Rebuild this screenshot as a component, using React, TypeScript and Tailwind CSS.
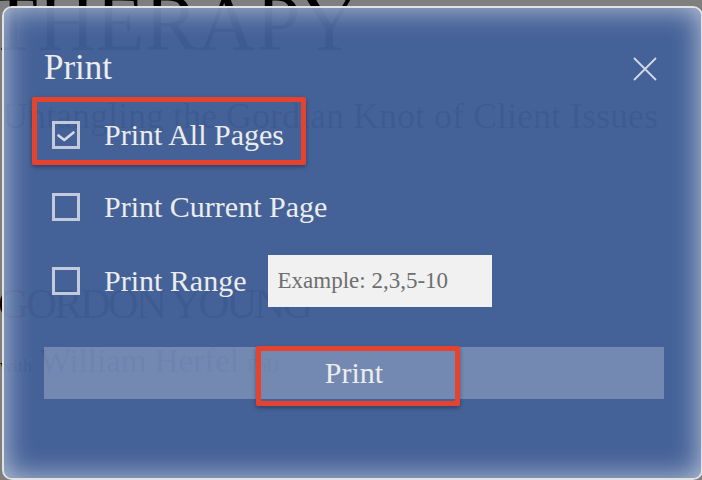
import React from "react";

function Checkbox({ checked }: { checked?: boolean }) {
  return (
    <span className="flex h-[28px] w-[28px] shrink-0 border-[3px] border-[#c2cadb]">
      {checked && (
        <svg width="22" height="22" viewBox="0 0 22 22" fill="none">
          <path
            d="M3.5 11.5 L9.3 16 L18.5 8.5"
            stroke="#d4dbe7"
            strokeWidth="2.6"
            strokeLinecap="round"
            strokeLinejoin="round"
          />
        </svg>
      )}
    </span>
  );
}

function Option({ label, checked }: { label: string; checked?: boolean }) {
  return (
    <label className="flex h-[28px] items-center gap-[24px] pl-[8px]">
      <Checkbox checked={checked} />
      <span className="text-[30px] leading-[30px] text-[#ececec]">{label}</span>
    </label>
  );
}

export default function App() {
  return (
    <div className="relative h-[480px] w-[702px] overflow-hidden bg-white font-['Liberation_Serif','Times_New_Roman',serif] text-black">
      {/* Page behind the dialog */}
      <div className="flex flex-col">
        <div className="ml-[-11px] mt-[-17px] whitespace-nowrap text-[80px] leading-[80px]">THERAPY</div>
        <div className="ml-[2px] mt-[35px] whitespace-nowrap text-[36px] leading-[36px]">
          Untangling the Gordian Knot of Client Issues
        </div>
        <div className="ml-[-2px] mt-[148px] whitespace-nowrap text-[43px] leading-[43px] tracking-[-3px]">
          GORDON YOUNG
        </div>
        <div className="mt-[20px] whitespace-nowrap text-[33px] leading-[33px]">
          <span className="text-[18px]">with</span> William Herfel <span className="text-[18px]">PhD</span>
        </div>
      </div>

      {/* Dimmed overlay */}
      <div className="absolute inset-0 bg-black/50" />

      {/* Print dialog */}
      <div className="absolute left-[2px] top-[6px] flex h-[474px] w-[701px] flex-col rounded-[10px] border-2 border-[#e2e2e2] bg-[rgba(66,97,154,0.94)] pl-[40px] shadow-[inset_0_0_28px_rgba(255,255,255,0.65)]">
        <div className="mt-[42px] flex items-center justify-between pr-[44px]">
          <h2 className="text-[35px] leading-[35px] text-[#ececec]">Print</h2>
          <button aria-label="Close" className="mt-[2px]">
            <svg width="24" height="24" viewBox="0 0 24 24" fill="none">
              <path d="M1 1 L23 23 M23 1 L1 23" stroke="#d3d9e5" strokeWidth="1.8" />
            </svg>
          </button>
        </div>

        <div className="mt-[36px] flex flex-col">
          <Option label="Print All Pages" checked />
          <div className="mt-[44px]">
            <Option label="Print Current Page" />
          </div>
          <div className="mt-[34px] flex h-[52px] items-center pl-[8px]">
            <Checkbox />
            <span className="ml-[24px] text-[30px] leading-[30px] text-[#ececec]">Print Range</span>
            <input
              placeholder="Example: 2,3,5-10"
              className="ml-[21px] h-[52px] w-[224px] bg-[#f1f1f1] px-[10px] text-[23px] text-[#333] outline-none placeholder:text-[#6e6e6e]"
            />
          </div>
        </div>

        <button className="mt-[40px] flex h-[52px] w-[620px] items-center justify-center bg-white/25 text-[30px] leading-[30px] text-[#ececec]">
          Print
        </button>
      </div>

      {/* Annotation highlights */}
      <div className="absolute left-[32px] top-[97px] h-[68px] w-[274px] rounded-[2px] border-[5px] border-[#e6432f] shadow-[0_2px_4px_rgba(0,0,0,0.35)]" />
      <div className="absolute left-[256px] top-[346px] h-[60px] w-[204px] rounded-[2px] border-[5px] border-[#e6432f] shadow-[0_2px_4px_rgba(0,0,0,0.35)]" />
    </div>
  );
}
